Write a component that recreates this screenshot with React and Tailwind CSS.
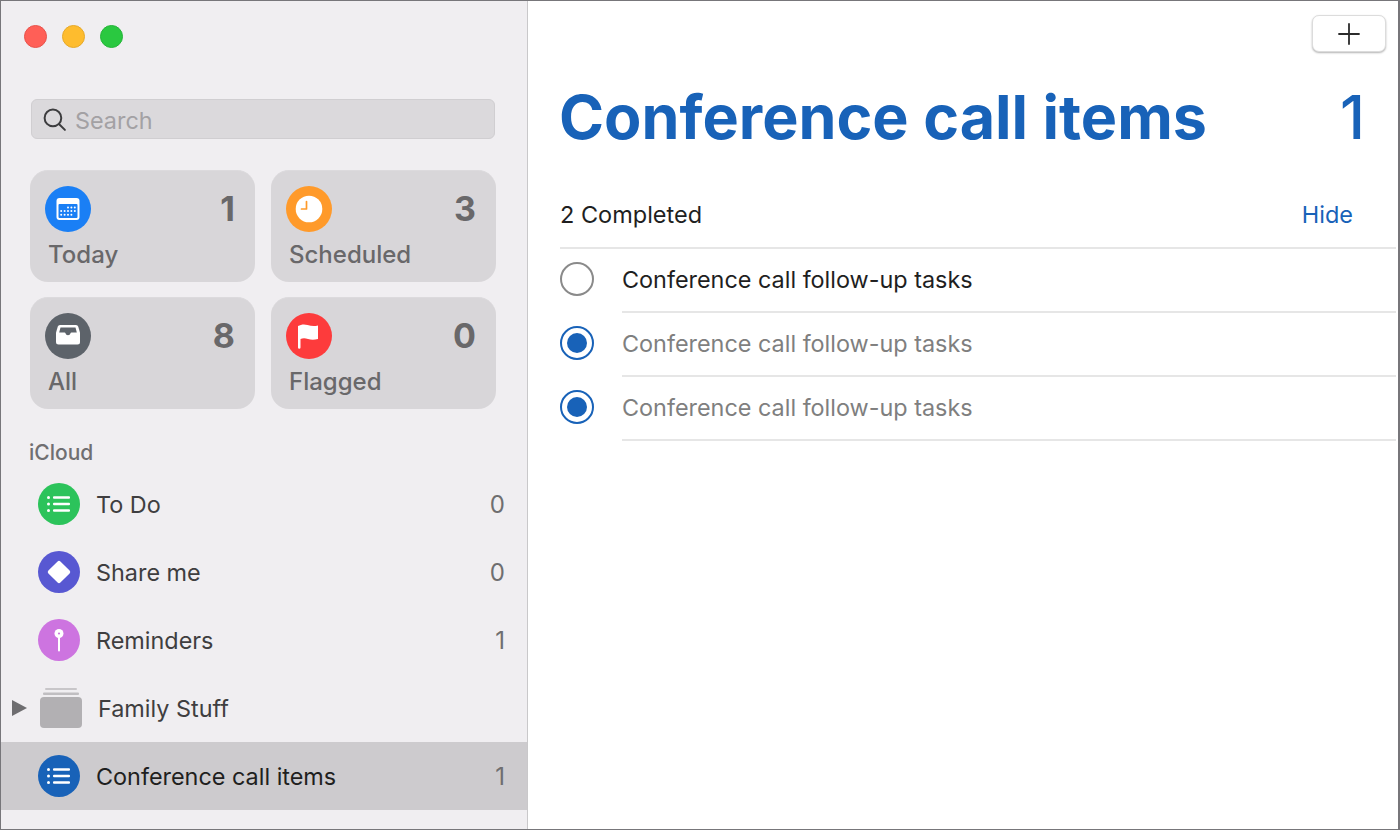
const font = { fontFamily: 'Inter, "Noto Sans", sans-serif' };

function ListLines() {
  return (
    <svg viewBox="0 0 42 42" className="w-[42px] h-[42px]" fill="#fff">
      <circle cx="10.500" cy="14.500" r="1.500" /><circle cx="10.500" cy="21" r="1.500" /><circle cx="10.500" cy="27.500" r="1.500" />
      <rect x="15" y="13.300" width="17" height="2.400" rx="1" /><rect x="15" y="19.800" width="17" height="2.400" rx="1" /><rect x="15" y="26.300" width="17" height="2.400" rx="1" />
    </svg>
  );
}

function CalendarIcon() {
  const dots = [];
  [[0, [2, 3, 4]], [1, [0, 1, 2, 3, 4]], [2, [0, 1, 2, 3]]].forEach(([r, cs]) =>
    cs.forEach((c) => dots.push(<circle key={r + '-' + c} cx={16.200 + c * 3.400} cy={21.500 + r * 3.600} r="1" fill="#fff" />))
  );
  return (
    <svg viewBox="0 0 46 46" className="w-[46px] h-[46px]">
      <rect x="11.500" y="12" width="23" height="22" rx="3" fill="#fff" />
      <rect x="13.500" y="18" width="19" height="14" rx="1" fill="#1a7ff5" />
      {dots}
    </svg>
  );
}

function ClockIcon() {
  return (
    <svg viewBox="0 0 46 46" className="w-[46px] h-[46px]">
      <circle cx="23" cy="23" r="13.300" fill="#fff" />
      <path d="M20.500 15.500v7.500h-5" fill="none" stroke="#ff9a2a" strokeWidth="1.700" strokeLinecap="round" strokeLinejoin="round" />
    </svg>
  );
}

function InboxIcon() {
  return (
    <svg viewBox="0 0 46 46" className="w-[46px] h-[46px]">
      <path d="M15 12h16a2.500 2.500 0 0 1 2.300 1.700l1.700 6v9.300a2.500 2.500 0 0 1-2.500 2.500H13.500a2.500 2.500 0 0 1-2.500-2.500v-9.300l1.700-6A2.500 2.500 0 0 1 15 12z" fill="#fff" />
      <path d="M15.500 14.500h15l1.300 5h-5.300c-.6 0-.9.3-1 .8-.3 1.300-1.200 2-2.500 2s-2.200-.7-2.500-2c-.1-.5-.4-.8-1-.8h-5.300z" fill="#5d636a" />
    </svg>
  );
}

function FlagIcon() {
  return (
    <svg viewBox="0 0 46 46" className="w-[46px] h-[46px]">
      <path d="M12 13c3-1.500 6-2 9.500-1s6.500 1.500 10.500.5V26c-3.500 1-7 1-10 0-3-1.200-5.500-1-7.500 0v8.500a1.200 1.200 0 0 1-2.500 0z" fill="#fff" />
    </svg>
  );
}

function DiamondIcon() {
  return (
    <svg viewBox="0 0 42 42" className="w-[42px] h-[42px]">
      <rect x="12.500" y="12.500" width="17" height="17" rx="2" fill="#fff" transform="rotate(45 21 21)" />
    </svg>
  );
}

function PinIcon() {
  return (
    <svg viewBox="0 0 42 42" className="w-[42px] h-[42px]">
      <circle cx="21" cy="14.500" r="4.500" fill="#fff" />
      <circle cx="21" cy="14.500" r="1.100" fill="#cd74e0" />
      <rect x="20" y="18" width="2" height="14.500" rx="1" fill="#fff" />
    </svg>
  );
}

function Card({ bg, icon, count, label }) {
  return (
    <div className="h-[112px] rounded-[18px] bg-[#d8d6d9] pl-[15px] pr-[20px] pt-[15px] border-t border-[#dcdadd]">
      <div className="flex justify-between">
        <div className={`w-[46px] h-[46px] rounded-full ${bg}`}>{icon}</div>
        <span className="text-[34px] leading-[46px] font-bold text-[#69686a]">{count}</span>
      </div>
      <div className="mt-[7px] pl-[3px] text-[24px] leading-[32px] font-medium text-[#69686a]">{label}</div>
    </div>
  );
}

function ListRow({ bg, icon, name, count, selected }) {
  return (
    <div className={`h-[68px] flex items-center pl-[37px] pr-[22px] ${selected ? 'bg-[#cdcbce]' : ''}`}>
      <div className={`w-[42px] h-[42px] rounded-full ${bg}`}>{icon}</div>
      <span className={`ml-[16px] mt-[1px] flex-1 text-[23.400px] ${selected ? 'text-[#1f1f20]' : 'text-[#3f3e40]'}`}>{name}</span>
      <span className="mt-[1px] text-[24px] text-[#6f6e70]">{count}</span>
    </div>
  );
}

function Task({ done }) {
  return (
    <div className="flex items-stretch h-[64px]">
      <div className="w-[62px] flex items-center pb-[4px]">
        {done ? (
          <div className="w-[34px] h-[34px] rounded-full border-2 border-[#1862b8] flex items-center justify-center">
            <div className="w-[20px] h-[20px] rounded-full bg-[#1862b8]" />
          </div>
        ) : (
          <div className="w-[34px] h-[34px] rounded-full border-2 border-[#8a8a8a]" />
        )}
      </div>
      <div className={`flex-1 flex items-center border-b-2 border-[#e6e6e6] text-[23.400px] ${done ? 'text-[#7f7f7f]' : 'text-[#1f1f1f]'}`}>
        Conference call follow-up tasks
      </div>
    </div>
  );
}

export default function App() {
  return (
    <div style={font} className="w-[1400px] h-[830px] flex bg-white border border-[#77767a] border-r-2 overflow-hidden">
      <aside className="w-[527px] shrink-0 bg-[#f0eef1] border-r border-[#c9c8ca] flex flex-col">
        <div className="flex gap-[15px] pl-[23px] pt-[24px]">
          <div className="w-[23px] h-[23px] rounded-full bg-[#ff5f57] border border-[#e8524c]" />
          <div className="w-[23px] h-[23px] rounded-full bg-[#febc2e] border border-[#e6a92a]" />
          <div className="w-[23px] h-[23px] rounded-full bg-[#2ac840] border border-[#25b539]" />
        </div>
        <div className="mt-[51px] ml-[30px] w-[464px] h-[40px] rounded-[6px] bg-[#dbd9dc] border border-[#d0ced1] flex items-center pl-[10px]">
          <svg viewBox="0 0 24 24" className="w-[25px] h-[25px]" fill="none" stroke="#3c3c3e" strokeWidth="1.900" strokeLinecap="round">
            <circle cx="10.500" cy="10.500" r="8" />
            <path d="M16.500 16.500L22 22" />
          </svg>
          <span className="ml-[8px] mt-[3px] text-[23.400px] text-[#a3a1a4]">Search</span>
        </div>
        <div className="mt-[31px] ml-[29px] grid grid-cols-2 gap-x-[16px] gap-y-[15px] w-[466px]">
          <Card bg="bg-[#1a7ff5]" icon={<CalendarIcon />} count="1" label="Today" />
          <Card bg="bg-[#ff9a2a]" icon={<ClockIcon />} count="3" label="Scheduled" />
          <Card bg="bg-[#5d636a]" icon={<InboxIcon />} count="8" label="All" />
          <Card bg="bg-[#fd3b3c]" icon={<FlagIcon />} count="0" label="Flagged" />
        </div>
        <div className="mt-[30px] ml-[28px] h-[28px] leading-[28px] text-[21px] font-medium text-[#706f71]">iCloud</div>
        <div className="mt-[3px] flex flex-col">
          <ListRow bg="bg-[#2cc35b]" icon={<ListLines />} name="To Do" count="0" />
          <ListRow bg="bg-[#5858d2]" icon={<DiamondIcon />} name="Share me" count="0" />
          <ListRow bg="bg-[#cd74e0]" icon={<PinIcon />} name="Reminders" count="1" />
          <div className="h-[68px] flex items-center pl-[11px]">
            <svg viewBox="0 0 15 16" className="w-[15px] h-[16px]"><path d="M0 0l15 8-15 8z" fill="#6e6d70" /></svg>
            <svg viewBox="0 0 42 42" className="ml-[13px] w-[42px] h-[42px]" fill="#b2b0b3">
              <rect x="5" y="1" width="32" height="2" rx="1" fill="#c8c6c9" />
              <rect x="3" y="5.500" width="36" height="2.500" rx="1" fill="#c0bec1" />
              <rect x="0" y="10" width="42" height="31" rx="4" />
            </svg>
            <span className="ml-[16px] mt-[1px] text-[23.400px] text-[#3f3e40]">Family Stuff</span>
          </div>
          <ListRow selected bg="bg-[#1862b8]" icon={<ListLines />} name="Conference call items" count="1" />
        </div>
      </aside>
      <main className="flex-1 flex flex-col pl-[32px] pr-[2px]">
        <div className="flex justify-end pt-[14px] pr-[10px]">
          <button className="w-[74px] h-[37px] rounded-[7px] bg-white border border-[#dcdcdc] shadow-[0_1px_2px_rgba(0,0,0,0.3)] flex items-center justify-center">
            <svg viewBox="0 0 22 22" className="w-[22px] h-[22px]" stroke="#2b2b2b" strokeWidth="1.800" strokeLinecap="round"><path d="M11 1v20M1 11h20" /></svg>
          </button>
        </div>
        <div className="mt-[23px] h-[84px] flex items-center justify-between pr-[31px] text-[#1862b8]">
          <h1 className="text-[61px] leading-[84px] font-bold -ml-[1px]">Conference call items</h1>
          <span className="text-[60px] leading-[84px] font-medium">1</span>
        </div>
        <div className="mt-[26px] h-[64px] flex items-center justify-between pr-[43px] border-b-2 border-[#e6e6e6] pb-[2px]">
          <span className="text-[23.500px] text-[#1f1f1f]">2 Completed</span>
          <span className="text-[23.500px] text-[#1862b8]">Hide</span>
        </div>
        <Task />
        <Task done />
        <Task done />
      </main>
    </div>
  );
}
